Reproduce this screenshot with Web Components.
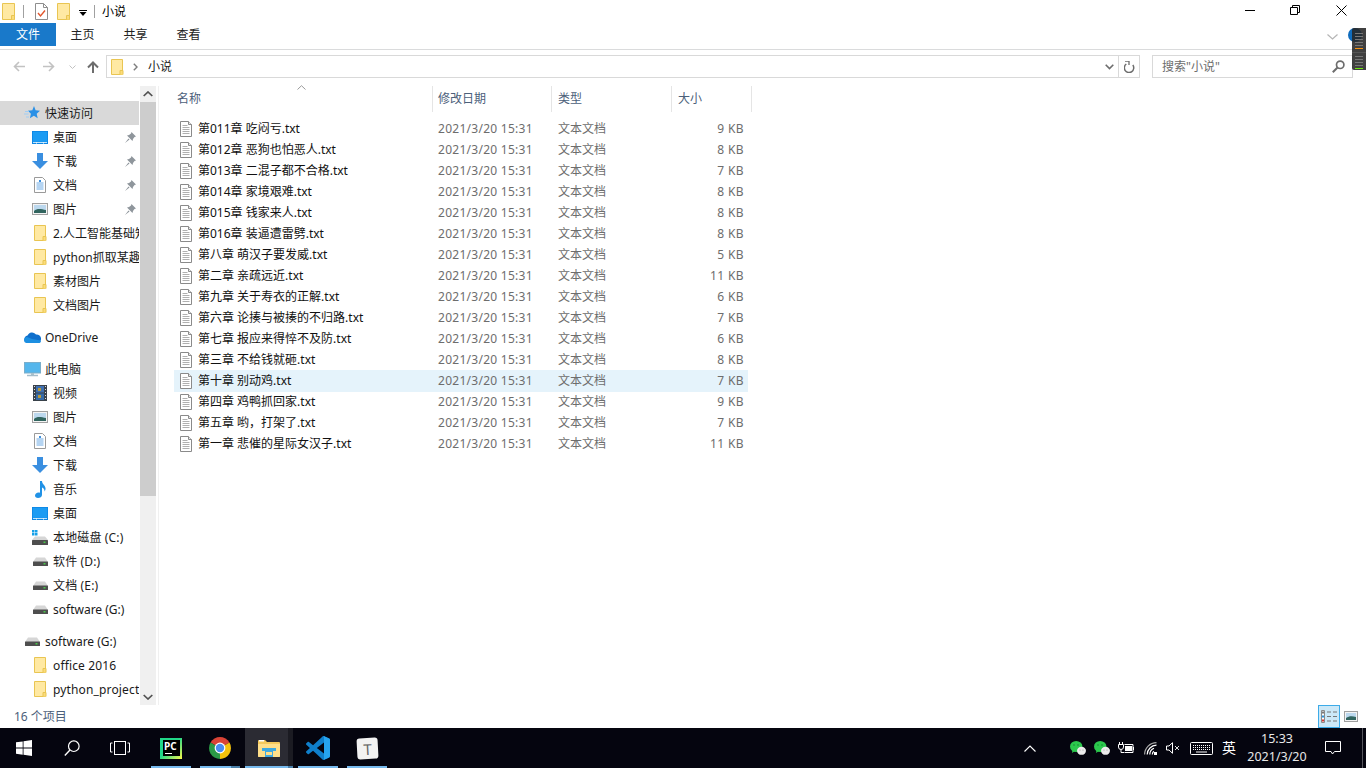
<!DOCTYPE html>
<html lang="zh-CN"><head><meta charset="utf-8"><title>小说</title>
<style>
html,body{margin:0;padding:0;background:#fff;overflow:hidden}
body{font:12px/16px "Noto Sans","Noto Sans CJK SC",sans-serif;color:#000}
</style></head><body>
<x-app></x-app>
<script>
const ICONS={
folder:[14,17,'<path d="M.5.5h12v16H.5z" fill="#fde58f" stroke="#e9c552"/><path d="M1 1h11v15H1z" fill="#ffe9a3"/><path d="M9.500 16.500v-4h3v4" fill="#fbdc7a" stroke="#e9c552"/>'],
foldersm:[13,16,'<path d="M.5.5h11v15H.5z" fill="#ffe9a3" stroke="#e9c552"/><path d="M9 15.500v-4h3v4" fill="#fbdc7a" stroke="#e9c552"/>'],
note:[13,17,'<path d="M.5.5h8l4 4v12H.5z" fill="#fff" stroke="#8e8e8e"/><path d="M8.500.5v4h4" fill="none" stroke="#8e8e8e"/><path d="M3 10l2.500 3L10 7.500" fill="none" stroke="#e2562c" stroke-width="1.400"/>'],
txt:[12,16,'<path d="M.5.5h8l3 3v12H.5z" fill="#fff" stroke="#8a8a8a"/><path d="M8.500.5v3h3" fill="#e8e8e8" stroke="#8a8a8a"/><path d="M2.500 4.500h5M2.500 6.500h7M2.500 8.500h7M2.500 10.500h7M2.500 12.500h7" stroke="#b0b0b0"/>'],
star:[16,14,'<path d="M10 0l1.600 4.200L16 4.700l-3.300 3 1 4.500-3.800-2.400-4 2.400 1-4.500-3-3 4.400-.5z" fill="#2a90e6"/><path d="M5 5.500H1M4.500 8H0M5 11H2" stroke="#9fcdf4"/>'],
desktop:[16,13,'<rect width="16" height="13" fill="#0d86e4"/><rect x=".8" y=".8" width="14.400" height="10" fill="#1c9cf3"/><path d="M1 11.500h14" stroke="#bfe3fb"/><path d="M4 12h1M11 12h1" stroke="#fff"/>'],
down:[16,16,'<path d="M5 0h6v8h5l-8 8-8-8h5z" fill="#3a8fe0"/>'],
doc:[12,16,'<path d="M.5.5h8l3 3v12H.5z" fill="#fff" stroke="#9a9a9a"/><path d="M5 3h2v2H5z" fill="#3c8fdc"/><path d="M2.500 6h7M2.500 8h7M2.500 10h7M2.500 12h7" stroke="#3c8fdc" stroke-opacity=".75"/>'],
pic:[16,12,'<rect x=".5" y=".5" width="15" height="11" fill="#f4f4f4" stroke="#a0a0a0"/><rect x="2" y="2" width="12" height="8" fill="#bcd8ee"/><path d="M2 8c3-3 7-2 12-1v3H2z" fill="#31655f"/>'],
onedrive:[17,11,'<path d="M4 11a3.800 3.800 0 0 1-.5-7.500A5 5 0 0 1 12 2.500 4 4 0 0 1 13.500 11z" fill="#0f6fcc"/><path d="M3 11c-2 0-3-1-3-3 0-1.800 1.300-3 3-3l5 2 8.800 1.500c.4 1.500-.5 2.500-2 2.500z" fill="#1d8fe1"/>'],
pc:[17,15,'<rect x=".5" y=".5" width="16" height="10.500" fill="#59b4e6" stroke="#7aaecb"/><rect x="1" y="1" width="15" height="9" fill="#55b6ec"/><path d="M7 11h3v2H7z" fill="#a9c1cc"/><path d="M3 13.500h11" stroke="#a5bdcb" stroke-width="1.500"/>'],
video:[14,16,'<rect width="14" height="16" fill="#39414a"/><rect x="3" y="1" width="8" height="6.500" fill="#3f6fb0"/><rect x="3" y="8.500" width="8" height="6.500" fill="#356aa8"/><path d="M5 3h3v3H5zM5 10h3v3H5z" fill="#b69a3c"/><path d="M1 1.500h1M1 4.500h1M1 7.500h1M1 10.500h1M1 13.500h1M12 1.500h1M12 4.500h1M12 7.500h1M12 10.500h1M12 13.500h1" stroke="#ddd"/>'],
music:[11,17,'<path d="M5 0h2c0 3 3 4 3.500 7 .2 1.500-.3 2.500-1 3.500.2-2-1-3.500-2.500-4v7.500C7 16 5 17 3 17s-3-1-3-2.500S1.500 11.500 3.500 11.500c.6 0 1.100.1 1.500.3z" fill="#2192e6"/>'],
drive:[15,9,'<path d="M3 .5h9L15 5H0z" fill="#d6d6d6"/><rect y="4.500" width="15" height="4.500" rx=".5" fill="#4e4e4e"/><rect x="10.500" y="6" width="2" height="1.500" fill="#49c84a"/>'],
drivec:[16,15,'<path d="M0 0h2.500v2.500H0zM3 0h2.500v2.500H3zM0 3h2.500v2.500H0zM3 3h2.500v2.500H3z" fill="#16a0e8"/><path d="M3 6.500h10l3 3.500H0z" fill="#d6d6d6"/><rect y="10" width="16" height="5" rx=".5" fill="#4e4e4e"/><rect x="11.500" y="11.500" width="2" height="1.500" fill="#49c84a"/>'],
pin:[11,11,'<path d="M6.500 0L11 4.500 9.500 5 8 7 7.500 9 2 3.500 4 3l2-1.500zM3.500 6.500L0 11l4.500-3.500z" fill="#8f969c"/>'],
mag:[13,13,'<circle cx="8.200" cy="4.800" r="3.700" fill="none" stroke="#6d6d6d" stroke-width="1.700"/><path d="M5.500 7.500L.8 12.200" stroke="#6d6d6d" stroke-width="2"/>'],
refresh:[11,12,'<path d="M2.500 2.500a4.700 4.700 0 1 0 6.500 1" fill="none" stroke="#6d6d6d" stroke-width="1.500" transform="translate(-.2 .5)"/><path d="M1 0h4v4" fill="none" stroke="#6d6d6d" stroke-width="1.300"/>'],
chev:[9,6,'<path d="M.7.7l3.800 3.800L8.300.7" fill="none" stroke="#6d6d6d" stroke-width="1.600"/>'],
chevl:[11,6,'<path d="M.5.500l5 4.500 5-4.500" fill="none" stroke="#b5b5b5" stroke-width="1.200"/>'],
chevr:[5,8,'<path d="M.8.8L4 4 .8 7.200" fill="none" stroke="#7d7d7d" stroke-width="1.400"/>'],
chevup:[10,6,'<path d="M.7 5L5 1l4.300 4" fill="none" stroke="#505050" stroke-width="1.700"/>'],
chevdn:[10,6,'<path d="M.7 1L5 5l4.300-4" fill="none" stroke="#505050" stroke-width="1.700"/>'],
sort:[9,5,'<path d="M.5 4.500L4.500.7l4 3.800" fill="none" stroke="#9a9a9a"/>'],
caret:[8,6,'<path d="M0 .5h8" stroke="#000"/><path d="M.5 2h7L4 6z" fill="#000"/>'],
back:[12,11,'<path d="M12 5.500H1.500M6 1L1.500 5.500 6 10" fill="none" stroke="#c2c2c2" stroke-width="1.600"/>'],
forw:[12,11,'<path d="M0 5.500h10.500M6 1l4.500 4.500L6 10" fill="none" stroke="#c2c2c2" stroke-width="1.600"/>'],
smdn:[7,4,'<path d="M.5.500L3.500 3.500 6.500.5" fill="none" stroke="#c2c2c2"/>'],
up:[12,12,'<path d="M6 12V1.500M1 6.500l5-5 5 5" fill="none" stroke="#6d6d6d" stroke-width="2"/>'],
min:[10,1,'<rect width="10" height="1" fill="#000"/>'],
restore:[10,10,'<path d="M.5 2.500h7v7h-7z M2.500 2.500V.5h7v7h-2" fill="none" stroke="#000"/>'],
close:[11,11,'<path d="M.5.5l10 10M10.500.5l-10 10" stroke="#000"/>'],
details:[16,13,'<path d="M.5.5h3v12h-3z" fill="#fff" stroke="#8a8a8a"/><path d="M1 1.500h2v2H1z" fill="#777"/><path d="M1 5.500h2v2H1z" fill="#2f92d8"/><path d="M1 9.500h2v2H1z" fill="#d8352f"/><path d="M6 2h4M12 2h4M6 6.500h4M12 6.500h4M6 11h4M12 11h4" stroke="#777"/>'],
thumb:[14,11,'<rect x=".5" y=".5" width="13" height="10" fill="#f4f4f4" stroke="#a0a0a0"/><rect x="2" y="2" width="10" height="7" fill="#bcd8ee"/><path d="M2 7c3-2 6-2 10-1v3H2z" fill="#31655f"/>'],
win:[16,16,'<path d="M0 2.300l6.700-.9v6.200H0zM7.500 1.300L16 0v7.600H7.500zM0 8.400h6.700v6.300L0 13.700zM7.500 8.400H16V16l-8.500-1.200z" fill="#fff"/>'],
search:[16,16,'<circle cx="9.800" cy="6.200" r="5.300" fill="none" stroke="#fff" stroke-width="1.200"/><path d="M6 10L.8 15.500" stroke="#fff" stroke-width="1.400"/>'],
taskview:[20,16,'<rect x="4.500" y=".5" width="11" height="13" fill="none" stroke="#fff" transform="translate(0 1)"/><path d="M2.500 3H.5v9h2M17.500 3h2v9h-2" fill="none" stroke="#fff"/>'],
chrome:[24,24,'<path d="M12 12L2.500 6.500A11 11 0 0 1 21.500 6.500z" fill="#da4336"/><path d="M12 12L21.500 6.500A11 11 0 0 1 12 23z" fill="#f4c20d"/><path d="M12 12L12 23A11 11 0 0 1 2.500 6.500z" fill="#2b9a46"/><circle cx="12" cy="12" r="5.400" fill="#fff"/><circle cx="12" cy="12" r="4.200" fill="#4a8cf0"/>'],
explorer:[22,18,'<path d="M0 2a1 1 0 0 1 1-1h6l2 2h12a1 1 0 0 1 1 1v13a1 1 0 0 1-1 1H1a1 1 0 0 1-1-1z" fill="#f5c95c"/><path d="M0 5h22v12a1 1 0 0 1-1 1H1a1 1 0 0 1-1-1z" fill="#ffdf8a"/><path d="M1 1h5v1.500H1z" fill="#fff"/><path d="M4 9h14v3l-3 .1V18H7v-5.900L4 12z" fill="#3fa9e0"/><path d="M8 13h6v3H8z" fill="#ffdf8a"/>'],
vscode:[24,24,'<g transform="scale(.24)"><path fill-rule="evenodd" d="M70.900 99.300c1.600.6 3.400.6 5-.2l20.600-9.900c2.200-1 3.500-3.200 3.500-5.600V16.400c0-2.400-1.400-4.600-3.500-5.600L75.900.9c-2.100-1-4.500-.8-6.300.6-.3.2-.5.4-.8.700L29.400 38.100 12.200 25.100c-1.600-1.200-3.800-1.100-5.300.2L1.400 30.400c-1.800 1.600-1.800 4.400 0 6.100L16.300 50 1.400 63.600c-1.800 1.700-1.800 4.500 0 6.100l5.500 5c1.500 1.400 3.700 1.500 5.300.3l17.200-13.100 39.400 35.900c.6.600 1.300 1.100 2.100 1.400zM75 27.300L45.100 50 75 72.700V27.300z" fill="#0f7fcb"/><path d="M75 .3c.3 0 .7.300.9.600l20.600 9.900c2.100 1 3.500 3.200 3.500 5.600v67.200c0 2.400-1.300 4.600-3.500 5.600l-20.600 9.900c-1.600.8-3.400.8-5 .2 2 .6 4.100-.8 4.100-3z" fill="#26a4ef"/></g>'],
wechat:[16,14,'<ellipse cx="6.200" cy="5.500" rx="6.200" ry="5.500" fill="#2cc84d"/><path d="M2.500 9l-.5 3 3-2z" fill="#2cc84d"/><ellipse cx="11.500" cy="9.800" rx="4.500" ry="4" fill="#ececec"/><circle cx="4" cy="4" r=".8" fill="#158a30"/><circle cx="8" cy="4" r=".8" fill="#158a30"/><circle cx="10" cy="9" r=".6" fill="#999"/><circle cx="13" cy="9" r=".6" fill="#999"/>'],
battery:[16,12,'<path d="M1.500 0v2.500M4.500 0v2.500" stroke="#fff"/><path d="M.5 2.500h5v2.500a2.500 2.500 0 0 1-5 0zM3 7.500v3h3" fill="none" stroke="#fff"/><path d="M6.500 2.500h8.500v8H6.500" fill="none" stroke="#fff"/><path d="M7 4h7v5H7z" fill="#fff"/><path d="M15.500 5v3" stroke="#fff"/>'],
wifi:[13,13,'<path d="M.6 12.500A12 12 0 0 1 12.500.6" fill="none" stroke="#a8a8a8" stroke-width="1.200"/><path d="M3.200 12.500a9.400 9.400 0 0 1 9.300-9.300M5.800 12.500A6.800 6.800 0 0 1 10 6.300" fill="none" stroke="#fff" stroke-width="1.200"/><path d="M8.300 12.500a4.300 4.300 0 0 1 1.500-3.200" fill="none" stroke="#fff" stroke-width="1.200"/><rect x="10" y="10" width="3" height="3" fill="#fff"/>'],
sound:[14,12,'<path d="M.5 4h2.500L6.500.7v10.600L3 8H.5z" fill="none" stroke="#fff"/><path d="M9 4l4 4M13 4l-4 4" stroke="#ddd"/>'],
kbd:[23,13,'<rect x=".5" y=".5" width="22" height="12" rx="1" fill="none" stroke="#fff"/><path d="M3 3.500h17M3 5.500h17M3 7.500h17" stroke="#fff" stroke-dasharray="1 1"/><path d="M6 10h11" stroke="#fff"/>'],
notify:[16,14,'<path d="M.5.5h15v10H9.500l-2 2.500-1.500-2.500H.5z" fill="none" stroke="#fff"/>'],
chevt:[12,7,'<path d="M.5 6.500L6 1l5.500 5.500" fill="none" stroke="#fff" stroke-width="1.100"/>'],
};
function def(name,css,html){
  customElements.define(name,class extends HTMLElement{
    connectedCallback(){
      if(this.shadowRoot)return;
      const r=this.attachShadow({mode:'open'});
      r.innerHTML='<style>'+css+'</style>'+(typeof html==='function'?html(this):html);
    }
  });
}
customElements.define('x-icon',class extends HTMLElement{
  connectedCallback(){
    if(this.shadowRoot)return;
    const [w,h,s]=ICONS[this.getAttribute('name')];
    this.attachShadow({mode:'open'}).innerHTML=`<style>:host{display:block;flex:none;line-height:0;width:${w}px;height:${h}px}svg{display:block}</style><svg width="${w}" height="${h}" viewBox="0 0 ${w} ${h}">${s}</svg>`;
  }
});
const ic=(n,st='')=>`<x-icon name="${n}" style="${st}"></x-icon>`;

def('x-titlebar',`:host{display:flex;align-items:center;height:23px;flex:none;padding-left:2px}
.s{width:1px;height:13px;background:#a0a0a0}span{font-size:12px;line-height:16px}.sp{flex:1}
.b{display:flex;align-items:center;justify-content:center;width:46px;height:23px;margin-top:-3px}`,
`${ic('folder','margin-right:7px')}<div class="s"></div>${ic('note','margin:0 9px 0 11px')}${ic('folder','margin-right:8px')}${ic('caret','margin-right:7px;margin-top:2px')}<div class="s"></div><span style="margin-left:7px">小说</span><div class="sp"></div>
<div class="b" style="width:45px">${ic('min')}</div><div class="b">${ic('restore')}</div><div class="b" style="margin-right:2px">${ic('close')}</div>`);

def('x-ribbon',`:host{display:flex;flex:none;height:27px;box-sizing:border-box;position:relative;align-items:flex-start}
.w{display:flex;height:26px;width:100%;border-bottom:1px solid #dadbdc;align-items:flex-start}
.f{width:56px;height:22px;padding-top:1px;background:#1979ca;color:#fff;display:flex;align-items:center;justify-content:center}
.t{height:22px;padding-top:1px;display:flex;align-items:center;width:53px;justify-content:center;color:#222}
.sp{flex:1}`,
`<div class="w"><div class="f">文件</div><div class="t">主页</div><div class="t">共享</div><div class="t">查看</div><div class="sp"></div>${ic('chevl','margin:11px 28px 0 0')}</div>`);

def('x-addressbar',`:host{display:flex;flex:none;height:36px;box-sizing:border-box;padding:5px 13px 8px 13px;align-items:stretch}
.n{display:flex;align-items:center;width:93px;flex:none}
.box{flex:1;border:1px solid #d9d9d9;display:flex;align-items:center;min-width:0;height:23px;box-sizing:border-box}
.srch{width:201px;flex:none;margin-left:12px;border:1px solid #d9d9d9;height:23px;box-sizing:border-box;display:flex;align-items:center;padding-left:9px;color:#6d6d6d}
.sp{flex:1}.d{width:1px;height:21px;background:#d9d9d9}`,
`<div class="n">${ic('back')}${ic('forw','margin-left:18px')}${ic('smdn','margin-left:14px')}${ic('up','margin-left:11px')}</div>
<div class="box">${ic('foldersm','margin-left:4px')}${ic('chevr','margin-left:9px')}<span style="margin-left:10px;color:#222">小说</span><div class="sp"></div>${ic('chev','margin-right:4px')}<div class="d"></div>${ic('refresh','margin:0 4px 0 5px')}</div>
<div class="srch"><span>搜索"小说"</span><div class="sp"></div>${ic('mag','margin-right:7px')}</div>`);

def('x-nav-item',`:host{display:flex;align-items:center;height:24px;white-space:nowrap;overflow:hidden;color:#1a1a1a;width:139px;position:relative}
:host([active]){background:#d9d9d9}
.ico{width:16px;display:flex;justify-content:center;flex:none;margin-right:5px}
.t{flex:none;padding-top:2px}
:host([ls]) .t{letter-spacing:.15px}
.p{position:absolute;right:3px;top:7px}`,
h=>`<div class="ico" style="margin-left:${h.hasAttribute('top')?24:32}px">${ic(h.getAttribute('icon'))}</div><span class="t">${h.getAttribute('label')}</span>${h.hasAttribute('pin')?`<div class="p">${ic('pin')}</div>`:''}`);

def('x-scroll',`:host{display:flex;flex-direction:column;width:16px;flex:none;background:#f0f0f0;position:relative;align-items:stretch}
.b{height:16px;display:flex;align-items:center;justify-content:center;flex:none}
.th{height:394px;background:#cdcdcd;flex:none}.sp{flex:1}`,
`<div class="b">${ic('chevup')}</div><div class="th"></div><div class="sp"></div><div class="b">${ic('chevdn')}</div>`);

def('x-nav',`:host{display:flex;width:156px;flex:none}
.l{width:140px;overflow:hidden;padding-top:15px;box-sizing:border-box;display:flex;flex-direction:column}
.g{height:8px;flex:none}`,
h=>{const it=[
['star','快速访问','top active'],['desktop','桌面','pin'],['down','下载','pin'],['doc','文档','pin'],['pic','图片','pin'],
['foldersm','2.人工智能基础知识',''],['foldersm','python抓取某趣阁小说',''],['foldersm','素材图片',''],['foldersm','文档图片',''],0,
['onedrive','OneDrive','top'],0,
['pc','此电脑','top'],['video','视频',''],['pic','图片',''],['doc','文档',''],['down','下载',''],['music','音乐',''],['desktop','桌面',''],
['drivec','本地磁盘 (C:)','ls'],['drive','软件 (D:)','ls'],['drive','文档 (E:)','ls'],['drive','software (G:)',''],0,
['drive','software (G:)','top'],['foldersm','office 2016','ls'],['foldersm','python_project','ls']];
return `<div class="l">`+it.map(i=>i?`<x-nav-item icon="${i[0]}" label="${i[1]}" ${i[2]}></x-nav-item>`:'<div class="g"></div>').join('')+`</div><x-scroll></x-scroll>`;});

def('x-file-row',`:host{display:flex;height:21px;align-items:center;width:574px;color:#6d6d6d;flex:none;box-sizing:border-box;padding-bottom:2px}
:host([hot]){background:#e5f3fb;height:22px;margin-top:-1px;padding-top:1px}
.n{width:259px;box-sizing:border-box;padding-left:6px;display:flex;align-items:center;color:#111;flex:none;white-space:nowrap}
.d{width:119px;padding-left:5px;box-sizing:border-box;flex:none;letter-spacing:.27px;white-space:nowrap}
.k{width:120px;padding-left:6px;box-sizing:border-box;flex:none}
.z{width:76px;padding-right:4px;box-sizing:border-box;text-align:right;flex:none;letter-spacing:.4px}`,
h=>`<div class="n">${ic('txt','margin-right:6px')}<span>${h.getAttribute('n')}</span></div><div class="d">2021/3/20 15:31</div><div class="k">文本文档</div><div class="z">${h.getAttribute('s')} KB</div>`);

def('x-filelist',`:host{display:flex;flex-direction:column;flex:1;min-width:0;padding-left:15px;border-left:1px solid #f0f0f0;margin-left:2px;position:relative}
.h{display:flex;height:26px;flex:none;color:#4c607a;margin-bottom:7px}
.h div{box-sizing:border-box;border-right:1px solid #e5e5e5;display:flex;align-items:center;flex:none}
.rows{display:flex;flex-direction:column}
.sort{position:absolute;left:138px;top:-1px}`,
h=>{const f=[['第011章 吃闷亏',9],['第012章 恶狗也怕恶人',8],['第013章 二混子都不合格',7],['第014章 家境艰难',8],['第015章 钱家来人',8],['第016章 装逼遭雷劈',8],['第八章 萌汉子要发威',5],['第二章 亲疏远近',11],['第九章 关于寿衣的正解',6],['第六章 论揍与被揍的不归路',7],['第七章 报应来得悴不及防',6],['第三章 不给钱就砸',8],['第十章 别动鸡',7],['第四章 鸡鸭抓回家',9],['第五章 哟，打架了',7],['第一章 悲催的星际女汉子',11]];
return `<div class="h"><div style="width:259px;padding-left:3px">名称</div><div style="width:119px;padding-left:5px">修改日期</div><div style="width:120px;padding-left:6px">类型</div><div style="width:80px;padding-left:6px">大小</div></div><div class="sort">${ic('sort')}</div><div class="rows">`+f.map((x,i)=>`<x-file-row n="${x[0]}.txt" s="${x[1]}" ${i==12?'hot':''}></x-file-row>`).join('')+`</div>`;});

def('x-statusbar',`:host{display:flex;align-items:center;height:23px;flex:none;padding-left:14px;color:#4c607a}
.sp{flex:1}.v{width:22px;height:23px;box-sizing:border-box;display:flex;align-items:center;justify-content:center}
.on{background:#cce8f7;border:1px solid #3dabe8}`,
`<span>16 个项目</span><div class="sp"></div><div class="v on">${ic('details')}</div><div class="v" style="margin-right:4px">${ic('thumb')}</div>`);

def('x-task',`:host{display:flex;align-items:center;justify-content:center;width:48px;height:40px;position:relative;flex:none;box-sizing:border-box}
:host([open])::after{content:"";position:absolute;left:4px;right:4px;bottom:0;height:2px;background:#76b9ed}
:host([stack])::after{background:linear-gradient(90deg,#76b9ed 0 31px,#4a7fa8 31px)}
:host([hot]){background:linear-gradient(90deg,#2b2b33 0 43px,#1b1b22 43px)}
:host([hot])::after{left:0;right:0;background:linear-gradient(90deg,#76b9ed 0 43px,#4a7fa8 43px)}`,`<slot></slot>`);

def('x-pycharm',`:host{display:block;width:22px;height:21px;flex:none;position:relative;background:linear-gradient(135deg,#21d789 0 45%,#fcf84a 100%);line-height:0}
.b{position:absolute;inset:2.500px;background:#000;color:#fff;font:700 10px/10px "Noto Sans",sans-serif}
.t{position:absolute;left:1.500px;top:1px;line-height:10px}.l{position:absolute;left:2px;bottom:2px;width:7px;height:1.500px;background:#fff}`,
`<div class="b"><span class="t">PC</span><div class="l"></div></div>`);

def('x-typora',`:host{display:flex;align-items:center;justify-content:center;width:21px;height:21px;background:#f2f2f2;border-radius:3px;transform:rotate(-3deg);color:#666;font:400 15px/20px "Noto Sans",sans-serif;flex:none}`,`T`);

def('x-taskbar',`:host{display:flex;align-items:center;height:40px;flex:none;background:#05050f;color:#fff}
.sp{flex:1}.c{display:flex;align-items:center;justify-content:center;height:40px;flex:none}
.clock{width:70px;margin:0 7px 0 2px;text-align:center;font-size:12.500px;line-height:18px;flex-direction:column;color:#e8e8e8;white-space:nowrap}`,
`<div class="c" style="width:48px">${ic('win')}</div><div class="c" style="width:48px">${ic('search')}</div><div class="c" style="width:48px">${ic('taskview')}</div>
<x-task open style="margin-left:3px"><x-pycharm></x-pycharm></x-task><x-task open stack style="margin-left:1px">${ic('chrome')}</x-task><x-task open hot style="margin-left:1px">${ic('explorer')}</x-task><x-task open style="margin-left:1px">${ic('vscode')}</x-task><x-task open style="margin-left:1px"><x-typora></x-typora></x-task>
<div class="sp"></div>
<div class="c" style="width:24px;margin-right:24px">${ic('chevt')}</div><div class="c" style="width:24px">${ic('wechat')}</div><div class="c" style="width:24px">${ic('wechat')}</div><div class="c" style="width:24px">${ic('battery')}</div><div class="c" style="width:24px">${ic('wifi')}</div><div class="c" style="width:22px">${ic('sound')}</div><div class="c" style="width:34px">${ic('kbd')}</div><div class="c" style="width:22px;font-size:14px">英</div>
<div class="c clock"><span>15:33</span><span>2021/3/20</span></div><div class="c" style="width:28px">${ic('notify')}</div><div style="width:1px;height:40px;margin:0 3px 0 15px;background:#55555c;flex:none"></div>`);

def('x-help',`:host{display:block;position:absolute;left:1348px;top:28px;width:18px;height:42px}
.o{position:absolute;left:0;top:0;width:14px;height:14px;border-radius:50%;background:#0f6cbd}
.w{position:absolute;left:4px;top:0;width:14px;height:42px;background:rgba(38,38,38,.88);border-radius:2px 0 0 2px;display:flex;flex-direction:column;padding-left:3px;box-sizing:border-box}
.x{height:1px;width:8px;background:#777;margin-top:2px;flex:none}
.sep{height:1px;background:#555;margin:3px 0 0 -3px;flex:none;width:14px}`,
`<div class="o"></div><div class="w"><div class="x" style="margin-top:5px"></div><div class="x"></div><div class="x"></div><div class="x"></div><div class="x"></div><div class="x" style="background:#f29111"></div><div class="sep"></div><div class="x" style="margin-top:3px"></div><div class="x"></div><div class="x"></div><div class="x"></div><div class="x" style="background:#6ee60f"></div></div>`);

def('x-app',`:host{display:flex;flex-direction:column;width:1366px;height:768px;position:relative;overflow:hidden;background:#fff}
.m{display:flex;flex:1;min-height:0}`,
`<x-titlebar></x-titlebar><x-ribbon></x-ribbon><x-addressbar></x-addressbar><div class="m"><x-nav></x-nav><x-filelist></x-filelist></div><x-statusbar></x-statusbar><x-taskbar></x-taskbar><x-help></x-help>`);
</script>
</body></html>
